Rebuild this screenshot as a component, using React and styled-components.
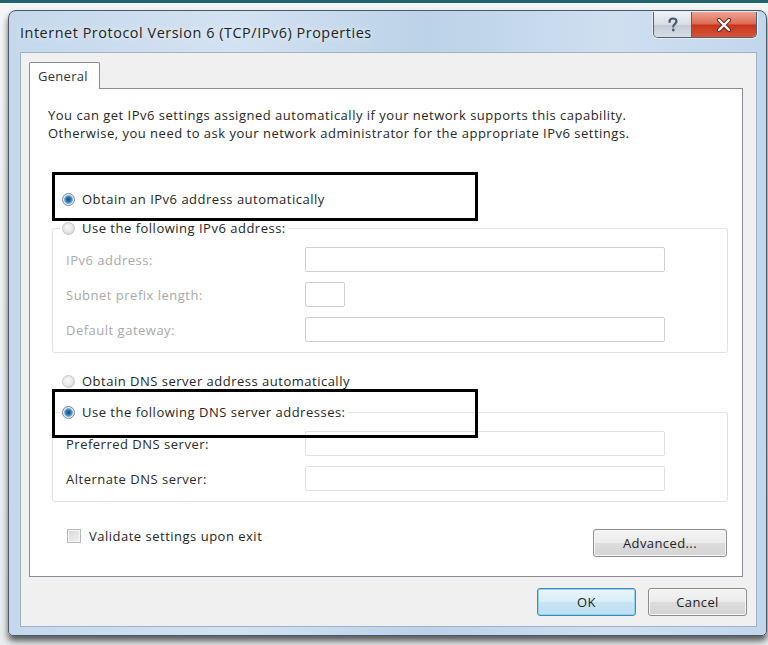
import styled, { createGlobalStyle } from "styled-components";

const GlobalStyle = createGlobalStyle`
  html, body {
    margin: 0;
    padding: 0;
    background: #eceeef;
  }
  body {
    font-family: "Open Sans", "Noto Sans", sans-serif;
  }
`;

export default function App() {
  return (
    <>
      <GlobalStyle />
      <Page>
        <Window>
          <TitleBar>
            <Title>Internet Protocol Version 6 (TCP/IPv6) Properties</Title>
            <Controls>
              <HelpButton>
                <svg width="14" height="15" viewBox="0 0 14 15">
                  <path d="M3.5 5 C3.5 2.2 5.2 1.5 7 1.5 C9 1.5 10.5 2.6 10.5 4.6 C10.5 6.8 7.3 7 7.3 9.6"
                    fill="none" stroke="#4d5a69" strokeWidth="2.2" strokeLinecap="round" />
                  <circle cx="7.3" cy="13" r="1.4" fill="#4d5a69" />
                </svg>
              </HelpButton>
              <CloseButton>
                <svg width="16" height="14" viewBox="0 0 16 14">
                  <path d="M3 2 L13 12 M13 2 L3 12" stroke="#6e2418" strokeWidth="4.2" strokeLinecap="round" />
                  <path d="M3 2 L13 12 M13 2 L3 12" stroke="#fff" strokeWidth="2.4" strokeLinecap="round" />
                </svg>
              </CloseButton>
            </Controls>
          </TitleBar>

          <Client>
            <Tabs>
              <Tab>General</Tab>
            </Tabs>
            <Panel>
              <Intro>
                <IntroLine>You can get IPv6 settings assigned automatically if your network supports this capability.</IntroLine>
                <IntroLine>Otherwise, you need to ask your network administrator for the appropriate IPv6 settings.</IntroLine>
              </Intro>

              <OptionRow $gap={48}>
                <Radio $checked />
                Obtain an IPv6 address automatically
              </OptionRow>

              <Group $gap={11}>
                <Legend>
                  <Radio />
                  Use the following IPv6 address:
                </Legend>
                <Fields>
                  <Field $disabled>
                    <FieldLabel>IPv6 address:</FieldLabel>
                    <TextBox $muted readOnly />
                  </Field>
                  <Field $disabled>
                    <FieldLabel>Subnet prefix length:</FieldLabel>
                    <TextBox $muted $short readOnly />
                  </Field>
                  <Field $disabled>
                    <FieldLabel>Default gateway:</FieldLabel>
                    <TextBox $muted readOnly />
                  </Field>
                </Fields>
              </Group>

              <OptionRow $gap={19}>
                <Radio />
                Obtain DNS server address automatically
              </OptionRow>

              <Group $gap={13}>
                <Legend>
                  <Radio $checked />
                  Use the following DNS server addresses:
                </Legend>
                <Fields>
                  <Field>
                    <FieldLabel>Preferred DNS server:</FieldLabel>
                    <TextBox readOnly />
                  </Field>
                  <Field>
                    <FieldLabel>Alternate DNS server:</FieldLabel>
                    <TextBox readOnly />
                  </Field>
                </Fields>
              </Group>

              <BottomRow>
                <CheckRow>
                  <CheckBox />
                  Validate settings upon exit
                </CheckRow>
                <Button $wide>Advanced...</Button>
              </BottomRow>

              <Marker $top={83} />
              <Marker $top={300} />
            </Panel>

            <Footer>
              <Button $primary>OK</Button>
              <Button>Cancel</Button>
            </Footer>
          </Client>
        </Window>
      </Page>
    </>
  );
}

const Page = styled.div`
  width: 768px;
  height: 645px;
  box-sizing: border-box;
  padding: 7px 1px 0 8px;
  border-top: 3px solid #24636b;
  background: linear-gradient(#f3f5f6, #e9ecee);
  overflow: hidden;
`;

const Window = styled.div`
  box-sizing: border-box;
  height: 626px;
  border: 1px solid #4c5866;
  border-radius: 8px 8px 5px 5px;
  padding: 0 9px 8px 11px;
  background: linear-gradient(90deg, #c5d8ec 0%, #d3e2f2 30%, #bcd2e8 55%, #cfdff0 80%, #c2d6ec 100%);
  box-shadow: 0 5px 6px rgba(40, 40, 40, 0.75);
  display: flex;
  flex-direction: column;
`;

const TitleBar = styled.div`
  height: 41px;
  display: flex;
  align-items: center;
  justify-content: space-between;
`;

const Title = styled.div`
  font-size: 14.4px;
  letter-spacing: 0.55px;
  color: #232323;
  padding-top: 1px;
  text-shadow: 0 0 6px rgba(255, 255, 255, 0.9);
`;

const Controls = styled.div`
  align-self: flex-start;
  margin-top: 1px;
  display: flex;
  height: 25px;
  border: 1px solid #56606d;
  border-top: none;
  border-radius: 0 0 5px 5px;
  overflow: hidden;
  box-shadow: 0 0 0 1px rgba(255, 255, 255, 0.5);
`;

const HelpButton = styled.div`
  width: 37px;
  display: flex;
  align-items: center;
  justify-content: center;
  background: linear-gradient(#eef2f6, #d7dee6 50%, #c3ccd6 51%, #d5dde5);
  border-right: 1px solid #56606d;
`;

const CloseButton = styled.div`
  width: 64px;
  display: flex;
  align-items: center;
  justify-content: center;
  background: linear-gradient(#eba493, #dc6a52 48%, #c8341b 52%, #d4553a);
`;

const Client = styled.div`
  flex: 1;
  box-sizing: border-box;
  border: 1px solid #9fb1c5;
  background: #f0f0f0;
  padding: 9px 13px 10px 8px;
  display: flex;
  flex-direction: column;
`;

const Tabs = styled.div`
  display: flex;
  position: relative;
  z-index: 1;
`;

const Tab = styled.div`
  width: 71px;
  height: 27px;
  box-sizing: border-box;
  border: 1px solid #898c95;
  border-bottom: none;
  border-radius: 2px 2px 0 0;
  background: #fff;
  font-size: 13px;
  letter-spacing: 0.3px;
  color: #333;
  padding: 4px 0 0 8px;
`;

const Panel = styled.div`
  position: relative;
  margin-top: -1px;
  height: 489px;
  box-sizing: border-box;
  border: 1px solid #898c95;
  background: #fff;
  padding: 17px 14px 0 18px;
  font-size: 13px;
  letter-spacing: 0.5px;
  color: #262626;
`;

const Intro = styled.div`
  display: flex;
  flex-direction: column;
`;

const IntroLine = styled.span`
  height: 18px;
  line-height: 18px;
  white-space: nowrap;
`;

const OptionRow = styled.div`
  margin-top: ${(p) => p.$gap}px;
  margin-left: 14px;
  height: 18px;
  display: flex;
  align-items: center;
  gap: 7px;
`;

const Radio = styled.span`
  width: 13px;
  height: 13px;
  box-sizing: border-box;
  border-radius: 50%;
  border: 1px solid ${(p) => (p.$checked ? "#6f8aa3" : "#c4c6c9")};
  background: ${(p) =>
    p.$checked
      ? "radial-gradient(circle at 50% 50%, #0f4f80 0, #2d78ad 2.5px, #7fb0d4 4px, #e8eef4 5px)"
      : "radial-gradient(circle at 45% 40%, #fafafa 0, #e6e6e6 5px, #dcdcdc 6px)"};
  flex: none;
`;

const Group = styled.fieldset`
  margin: ${(p) => p.$gap}px 0 0 4px;
  padding: 0;
  min-width: 0;
  border: 1px solid #dde3e8;
  border-radius: 3px;
`;

const Legend = styled.legend`
  margin-left: 7px;
  padding: 0 2px;
  height: 18px;
  display: flex;
  align-items: center;
  gap: 7px;
`;

const Fields = styled.div`
  display: flex;
  flex-direction: column;
  gap: 10px;
  padding: 10px 0 10px 13px;
`;

const Field = styled.div`
  display: flex;
  align-items: center;
  height: 25px;
  color: ${(p) => (p.$disabled ? "#a9a9a9" : "#2a2a2a")};
`;

const FieldLabel = styled.span`
  width: 239px;
  flex: none;
`;

const TextBox = styled.input`
  width: ${(p) => (p.$short ? 40 : 360)}px;
  height: 25px;
  box-sizing: border-box;
  margin: 0;
  padding: 0;
  border: 1px solid ${(p) => (p.$muted ? "#cfcfcf" : "#dfe1e6")};
  border-radius: 2px;
  background: #fff;
  outline: none;
`;

const BottomRow = styled.div`
  margin-top: 25px;
  display: flex;
  justify-content: space-between;
  align-items: flex-start;
  padding-right: 1px;
`;

const CheckRow = styled.div`
  margin-left: 19px;
  height: 18px;
  display: flex;
  align-items: center;
  gap: 8px;
`;

const CheckBox = styled.span`
  width: 14px;
  height: 14px;
  box-sizing: border-box;
  border: 1px solid #b8b8b8;
  background: linear-gradient(135deg, #d8d8d8, #f2f2f2);
  box-shadow: inset 0 0 0 1px #f6f6f6;
  flex: none;
`;

const Button = styled.div`
  width: ${(p) => (p.$wide ? 134 : 99)}px;
  height: 28px;
  box-sizing: border-box;
  margin-top: ${(p) => (p.$wide ? 2 : 0)}px;
  display: flex;
  align-items: center;
  justify-content: center;
  font-size: 13px;
  letter-spacing: 0.4px;
  color: #222;
  border-radius: 3px;
  border: 1px solid ${(p) => (p.$primary ? "#3d8cc0" : "#8c8c8c")};
  background: ${(p) =>
    p.$primary
      ? "linear-gradient(#eaf5fb, #d9eef9 50%, #c6e5f5 51%, #bfe0f2)"
      : "linear-gradient(#f4f4f4, #ebebeb 50%, #dddddd 51%, #d3d3d3)"};
  box-shadow: inset 0 0 0 1px ${(p) => (p.$primary ? "#8fd0ef" : "#f7f7f7")};
`;

const Footer = styled.div`
  margin-top: 11px;
  margin-right: -4px;
  display: flex;
  justify-content: flex-end;
  gap: 12px;
`;

const Marker = styled.div`
  position: absolute;
  left: 22px;
  top: ${(p) => p.$top}px;
  width: 426px;
  height: 49px;
  box-sizing: border-box;
  border: 3px solid #000;
  pointer-events: none;
`;
